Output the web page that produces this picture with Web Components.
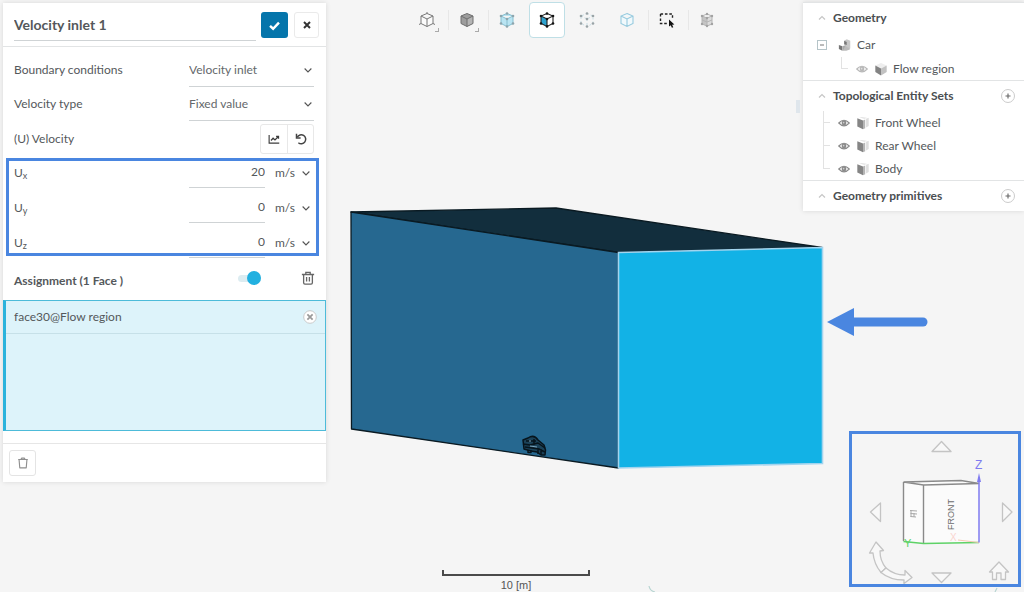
<!DOCTYPE html>
<html lang="en">
<head>
<meta charset="utf-8">
<title>Velocity inlet 1</title>
<style>
  body { margin: 0; background: #f5f5f5; color: #54585b; font: 12px/20px Lato, sans-serif; }
</style>
</head>
<body>
<sim-workbench>
  <flow-scene slot="scene"></flow-scene>
  <inlet-panel slot="left"></inlet-panel>
  <view-toolbar slot="tools"></view-toolbar>
  <geometry-panel slot="right"></geometry-panel>
  <scale-bar slot="scale">10 [m]</scale-bar>
  <view-cube slot="cube"></view-cube>
</sim-workbench>

<script>
const define = (name, css, html) => customElements.define(name, class extends HTMLElement {
  constructor() {
    super();
    const root = this.attachShadow({ mode: 'open' });
    root.innerHTML = `<style>*{box-sizing:border-box}button,input,select{font:inherit;color:inherit;margin:0}button{padding:0;cursor:pointer}${css}</style>` +
      (typeof html === 'function' ? html(this) : html);
  }
});

/* Icons */
const hex = 'M8 1.5 14 4V11.500L8 14.5 2 11.500V4Z';
const inner = 'M2 4 8 7 14 4M8 7V14.5';
const dots = color => `<g fill="${color}"><circle cx="8" cy="1.5" r="1.3"/><circle cx="14" cy="4" r="1.3"/><circle cx="14" cy="11.5" r="1.3"/><circle cx="8" cy="14.5" r="1.3"/><circle cx="2" cy="11.5" r="1.3"/><circle cx="2" cy="4" r="1.3"/><circle cx="8" cy="7" r="1.3"/></g>`;
const icons = {
  check: '<path d="M2.5 8.5 6.3 12 13.5 4.5" fill="none" stroke="#fff" stroke-width="3"/>',
  close: '<path d="M4 4 12 12M12 4 4 12" stroke="#333" stroke-width="2.6"/>',
  chevron: '<path d="M3.5 6 8 10.5 12.5 6" fill="none" stroke="#555" stroke-width="1.5"/>',
  up: '<path d="M4 10 8 6 12 10" fill="none" stroke="#c6c6c6" stroke-width="1.6"/>',
  chart: '<path d="M1.5 2.5V13.5H15" fill="none" stroke="#3c3c3c" stroke-width="1.5"/><path d="M4 10 6.8 7 9.3 9.2 13.5 5M10.8 4.6H14V7.8" fill="none" stroke="#3c3c3c" stroke-width="1.7"/>',
  undo: '<path d="M3 5.500A6 6 0 1 1 4.500 13" fill="none" stroke="#444" stroke-width="2"/><path d="M2 1V6.500H7.500" fill="none" stroke="#444" stroke-width="2"/>',
  trash: '<path d="M1 4H15M5.5 4V1.5H10.5V4M3 4V13.5Q3 15 4.5 15H11.5Q13 15 13 13.5V4M6.4 6.8V12M9.6 6.8V12" fill="none" stroke="#666" stroke-width="1.5"/>',
  bin: '<path d="M2.5 4H13.5M5.5 4 6.5 2.5H9.5L10.5 4M3.5 4 4.3 13.5H11.7L12.5 4" fill="none" stroke="#8f8f8f" stroke-width="1.3" stroke-linejoin="round"/>',
  minus: '<path d="M4 8H12" stroke="#777" stroke-width="2"/>',
  plus: '<path d="M8 4V12M4 8H12" stroke="#666" stroke-width="1.8"/>',
  remove: '<circle cx="8" cy="8" r="7.2" fill="#fff" stroke="#c4c4c4" stroke-width="1"/><path d="M5 5 11 11M11 5 5 11" stroke="#9a9a9a" stroke-width="2"/>',
  eye: '<path d="M1 8Q8 0.5 15 8Q8 15.5 1 8Z" fill="#fff" stroke="#8a8a8a" stroke-width="1.5"/><circle cx="8" cy="8" r="3.2" fill="#8a8a8a"/><circle cx="7.500" cy="7.500" r="1.1" fill="#ccc"/>',
  solid: '<path d="M8 1 14.5 4 8 7.5 1.5 4Z" fill="#eee"/><path d="M1.5 4 8 7.5V15.5L1.5 11.5Z" fill="#838383"/><path d="M14.5 4 8 7.5V15.5L14.5 11.5Z" fill="#c2c2c2"/>',
  faces: '<path d="M1.500 2.500 8 5V15L1.500 12Z" fill="#858585"/><path d="M8 5 10.500 4V14L8 15Z" fill="#b5b5b5"/><path d="M11.500 3 14.500 2V11.500L11.500 13Z" fill="#dedede"/><path d="M3.5 1.5 9.5 3.5 12.5 2 7 1Z" fill="#e6e6e6"/>',
  part: '<path d="M1 8 5 9.5V14.5L1 12.5Z" fill="#777"/><path d="M5 9.5 9 8V12.5L5 14.5Z" fill="#aaa"/><path d="M9 8 13.5 9.5V13L9.5 14.5 5.5 14.5Z" fill="#bbb"/><path d="M7 3 10 1.5 14 3V12L9.5 10V5Z" fill="#c8c8c8"/><path d="M7 3 10 4.5V8L7 7.5Z" fill="#777"/>',
  wire: `<path d="${hex}${inner}" fill="#fbfbfb" stroke="#777" stroke-width="1"/><path d="M0 12.5 2 11.5M16 12.5 14 11.5M8 1.5V0" stroke="#777"/>`,
  shaded: `<path d="${hex}" fill="#9d9d9d"/><path d="M8 7 14 4V11.500L8 14.5Z" fill="#b4b4b4"/><path d="${hex}${inner}" fill="none" stroke="#6f6f6f" stroke-width="1"/>`,
  volume: `<path d="${hex}${inner}" fill="#b9e4f2" stroke="#86bfd0" stroke-width="1"/>${dots('#8ea5ad')}`,
  face: `<path d="${hex}" fill="#fff"/><path d="M2 4 8 7V14.5L2 11.500Z" fill="#2ea3d0"/><path d="${hex}${inner}" fill="none" stroke="#222" stroke-width="1.1"/>${dots('#111')}`,
  nodes: `<path d="${hex}${inner}" fill="none" stroke="#c9dde4" stroke-width="1" stroke-dasharray="2 2"/>${dots('#9aa3a6')}`,
  body: `<path d="${hex}${inner}" fill="#f1f9fc" stroke="#96cade" stroke-width="1.1"/>`,
  box: '<path d="M1.500 2H13.500V7M1.500 2V11.500H9" fill="none" stroke="#222" stroke-width="1.400" stroke-dasharray="2.600 1.800"/><path d="M10 7.5V14.6L11.7 13.2 12.9 15.8 14.3 15.2 13.1 12.7 15.4 12.4Z" fill="#111"/>',
  mesh: '<path d="M3 4 8 6V14L3 12Z" fill="#c4c4c4"/><path d="M8 6 13 4V12L8 14Z" fill="#dcdcdc"/><path d="M3 4 8 2 13 4 8 6ZM3 8 8 10 13 8M3 12 8 14 13 12M8 6V14M3 4V12M13 4V12" fill="none" stroke="#b4b4b4" stroke-width="1"/><g fill="#a2a2a2"><circle cx="8" cy="2" r="1.200"/><circle cx="3" cy="4" r="1.200"/><circle cx="13" cy="4" r="1.200"/><circle cx="8" cy="6" r="1.200"/><circle cx="3" cy="12" r="1.200"/><circle cx="13" cy="12" r="1.200"/><circle cx="8" cy="14" r="1.200"/></g>'
};
customElements.define('ui-icon', class extends HTMLElement {
  constructor() {
    super();
    const size = this.getAttribute('size') || 16;
    this.attachShadow({ mode: 'open' }).innerHTML =
      `<style>:host{display:block;flex:none}svg{display:block}</style>
       <svg width="${size}" height="${size}" viewBox="0 0 16 16" aria-hidden="true">${icons[this.getAttribute('name')]}</svg>`;
  }
});

define('sim-workbench', `
  :host { display: grid; position: relative; min-height: 100vh; overflow: hidden;
    grid-template: auto 1fr auto / 326px 1fr 221px; }
  ::slotted([slot=scene]) { position: absolute; inset: 0; }
  ::slotted([slot=left]) { grid-area: 1 / 1 / 4 / 2; align-self: start; margin: 3px 0 0 3px; z-index: 1; }
  ::slotted([slot=tools]) { grid-area: 1 / 2; align-self: start; z-index: 1; }
  ::slotted([slot=right]) { grid-area: 1 / 3; align-self: start; margin-top: 2px; z-index: 1; }
  ::slotted([slot=scale]) { grid-area: 3 / 1 / 4 / 4; align-self: end; justify-self: center; margin-left: 8px; z-index: 1; }
  ::slotted([slot=cube]) { grid-area: 2 / 3 / 4 / 4; place-self: end; margin: 0 3px 5px 0; z-index: 1; }`,
  `<slot name="scene"></slot><slot name="left"></slot><slot name="tools"></slot><slot name="right"></slot><slot name="scale"></slot><slot name="cube"></slot>`);

/* Left panel */
define('select-field', `
  :host { display: block; }
  .row { display: grid; grid-template-columns: 1fr 125px; align-items: center; height: 34px; }
  .pick { display: grid; align-items: center; height: 34px; border-bottom: 1px solid #cfd3d5; }
  select { grid-area: 1 / 1; width: 100%; height: 30px; border: 0; padding: 0; background: none; appearance: none; color: #64686b; outline: 0; }
  ui-icon { grid-area: 1 / 1; justify-self: end; pointer-events: none; }`,
  el => `<div class="row"><label for="s">${el.getAttribute('label')}</label>
    <span class="pick"><select id="s"><option>${el.getAttribute('value')}</option></select><ui-icon name="chevron" size="12"></ui-icon></span></div>`);

define('component-field', `
  :host { display: block; }
  .row { display: grid; grid-template-columns: 1fr 76px 49px; height: 35px; }
  label { line-height: 34px; }
  ::slotted(sub) { font-size: 9px; line-height: 0; vertical-align: -2px; }
  input { min-width: 0; height: 32px; border: 0; border-bottom: 1px solid #cfd3d5; border-radius: 0; background: none; text-align: right; padding: 0; outline: 0; }
  .unit { display: grid; align-items: center; height: 34px; }
  select { grid-area: 1 / 1; border: 0; padding: 0 0 0 10px; background: none; appearance: none; outline: 0; width: 100%; }
  ui-icon { grid-area: 1 / 1; justify-self: end; pointer-events: none; margin-right: 2px; }`,
  el => `<div class="row"><label for="v"><slot></slot></label><input id="v" value="${el.getAttribute('value')}">
    <span class="unit"><select aria-label="Unit"><option>m/s</option></select><ui-icon name="chevron" size="12"></ui-icon></span></div>`);

define('toggle-switch', `
  :host { display: block; }
  label { display: grid; width: 23px; height: 16px; align-items: center; }
  input { grid-area: 1 / 1; appearance: none; width: 23px; height: 7px; border-radius: 4px; background: #dcecf1; }
  i { grid-area: 1 / 1; justify-self: end; width: 14px; height: 14px; border-radius: 50%; background: #22b0e0; pointer-events: none; }
  input:not(:checked) + i { justify-self: start; background: #aaa; }`,
  `<label><input type="checkbox" checked aria-label="Face selection"><i></i></label>`);

define('inlet-panel', `
  :host { display: block; background: #fff; box-shadow: 0 0 5px rgba(0,0,0,.12); }
  header { display: flex; align-items: flex-start; height: 44px; padding: 9px 7px 0 11px; border-bottom: 1px solid #e2e4e5; }
  .title { flex: 1; min-width: 0; height: 29px; border: 0; border-bottom: 1px solid #cfd3d5; border-radius: 0; padding: 0 0 4px; font-size: 14px; font-weight: 700; background: none; outline: 0; }
  .ok, .no { display: grid; place-items: center; height: 26px; border-radius: 3px; }
  .ok { width: 27px; margin: 0 6px 0 5px; border: 0; background: #0575ab; }
  .no { width: 25px; border: 1px solid #eaeaea; background: #fff; }
  .fields { padding: 6px 12px 0 11px; }
  .velocity { display: flex; align-items: center; justify-content: space-between; height: 35px; }
  .pair { display: flex; border: 1px solid #e8e8e8; border-radius: 3px; }
  .pair button { display: grid; place-items: center; width: 26px; height: 28px; border: 0; background: none; }
  .pair button + button { border-left: 1px solid #e8e8e8; }
  .vector { position: relative; }
  .vector::after { content: ""; position: absolute; inset: 2px -5px 5px -8px; border: 3px solid #4a86e0; pointer-events: none; }
  .assign { display: flex; align-items: center; height: 39px; padding: 0 11px 5px; font-weight: 700; }
  .assign span { flex: 1; padding-top: 6px; }
  .assign toggle-switch { margin-right: 40px; }
  .icon { border: 0; background: none; display: grid; }
  ul { list-style: none; margin: 0; padding: 0; min-height: 131px; border: 1px solid #4dbbd9; border-left: 3px solid #2bb3dc; background: #ddf3fa; }
  li { display: flex; align-items: center; justify-content: space-between; height: 33px; padding: 0 8px; border-bottom: 1px solid #c6e0e8; }
  footer { margin-top: 12px; padding: 6px; border-top: 1px solid #e6e6e6; }
  .del { display: grid; place-items: center; width: 27px; height: 26px; border: 1px solid #e4e4e4; border-radius: 3px; background: #fff; }`,
  `<header><input class="title" aria-label="Name" value="Velocity inlet 1">
     <button class="ok" aria-label="Apply"><ui-icon name="check" size="13"></ui-icon></button>
     <button class="no" aria-label="Close"><ui-icon name="close" size="12"></ui-icon></button></header>
   <div class="fields">
     <select-field label="Boundary conditions" value="Velocity inlet"></select-field>
     <select-field label="Velocity type" value="Fixed value"></select-field>
     <div class="velocity"><span>(U) Velocity</span><span class="pair">
       <button aria-label="Table input"><ui-icon name="chart" size="12"></ui-icon></button><button aria-label="Reset"><ui-icon name="undo" size="12"></ui-icon></button></span></div>
     <div class="vector">
       <component-field value="20">U<sub>x</sub></component-field>
       <component-field value="0">U<sub>y</sub></component-field>
       <component-field value="0">U<sub>z</sub></component-field>
     </div>
   </div>
   <div class="assign"><span>Assignment (1 Face )</span><toggle-switch></toggle-switch>
     <button class="icon" aria-label="Clear assignment"><ui-icon name="trash" size="14"></ui-icon></button></div>
   <ul><li>face30@Flow region<button class="icon" aria-label="Remove face"><ui-icon name="remove" size="14"></ui-icon></button></li></ul>
   <footer><button class="del" aria-label="Delete"><ui-icon name="bin" size="14"></ui-icon></button></footer>`);

/* Toolbar */
define('view-toolbar', `
  :host { display: flex; justify-content: center; padding: 2px 0 0 4px; }
  .slot { display: grid; place-items: center; width: 40px; height: 36px; position: relative; }
  .line::after { content: ""; position: absolute; right: -2px; top: 8px; height: 20px; border-right: 1px solid #e7e7e7; }
  button { display: grid; place-items: center; width: 36px; height: 36px; border: 1px solid transparent; border-radius: 4px; background: none; }
  button[aria-pressed=true] { background: #fff; border-color: #bfdfe6; }
  .more::before { content: ""; position: absolute; right: 8px; bottom: 6px; width: 3px; height: 3px; border: solid #aaa; border-width: 0 1px 1px 0; }`,
  [['wire','Wireframe','line more'],['shaded','Shaded','line more'],['volume','Pick volumes',''],['face','Pick faces',''],['nodes','Pick nodes',''],['body','Pick bodies','line'],['box','Box select','line'],['mesh','Mesh','']]
    .map(([icon, name, cls]) => `<span class="slot ${cls}"><button aria-label="${name}" aria-pressed="${icon === 'face'}"><ui-icon name="${icon}" size="16"></ui-icon></button></span>`).join(''));

/* Geometry tree */
define('tree-section', `
  :host { display: block; border-top: 1px solid #e2e4e5; }
  header { display: flex; align-items: center; height: 30px; padding: 0 9px 0 13px; font-weight: 700; color: #4a4e51; }
  ui-icon { margin-right: 5px; }
  h2 { flex: 1; margin: 0; font: inherit; }
  button { display: grid; place-items: center; width: 14px; height: 14px; border: 1px solid #ccc; border-radius: 50%; background: #fff; }
  button ui-icon { margin: 0; }`,
  el => `<header><ui-icon name="up" size="12"></ui-icon><h2>${el.getAttribute('heading')}</h2>${el.hasAttribute('addable') ? '<button aria-label="Add"><ui-icon name="plus" size="10"></ui-icon></button>' : ''}</header><slot></slot>`);

define('tree-item', `
  :host { display: flex; align-items: center; height: 23px; padding-left: 20px; }
  :host([deep]) { padding-left: 38px; }
  :host([root]) { padding-left: 14px; height: 24px; }
  .branch { align-self: stretch; width: 7px; margin-right: 8px; border-left: 1px solid #e2e2e2;
    background: linear-gradient(#e2e2e2, #e2e2e2) 0 50% / 7px 1px no-repeat; }
  :host([last]) .branch { height: 12px; align-self: flex-start; background-position: 0 100%; }
  .fold { display: grid; place-items: center; width: 10px; height: 10px; border: 1px solid #b5c4c8; background: #fff; margin-right: 11px; }
  .eye { border: 0; background: none; display: grid; margin-right: 6px; }
  :host([deep]) .eye { opacity: .6; }
  .kind { margin-right: 5px; }`,
  el => (el.hasAttribute('root') ? '<button class="fold" aria-label="Collapse"><ui-icon name="minus" size="8"></ui-icon></button>'
      : '<span class="branch"></span><button class="eye" aria-label="Toggle visibility"><ui-icon name="eye" size="12"></ui-icon></button>')
    + `<ui-icon class="kind" name="${el.getAttribute('icon')}" size="14"></ui-icon><span><slot></slot></span>`);

define('geometry-panel', `
  :host { display: block; position: relative; background: #fff; box-shadow: 0 0 5px rgba(0,0,0,.12); }
  :host::before { content: ""; position: absolute; left: -7px; top: 98px; width: 4px; height: 13px; background: #dfe6ec; }`,
  `<tree-section heading="Geometry"><tree-item root icon="part">Car</tree-item><tree-item deep last icon="solid">Flow region</tree-item></tree-section>
   <tree-section heading="Topological Entity Sets" addable><tree-item icon="faces">Front Wheel</tree-item><tree-item icon="faces">Rear Wheel</tree-item><tree-item last icon="faces">Body</tree-item></tree-section>
   <tree-section heading="Geometry primitives" addable></tree-section>`);

/* 3D viewport */
define('flow-scene', `:host { display: block; } svg { display: block; width: 100%; height: 100%; }`,
  `<svg viewBox="0 0 1024 592" role="img" aria-label="Flow region with inlet face selected">
    <g stroke="#0a1a22" stroke-width="1.3" stroke-linejoin="round">
      <path d="M351 212 556 208 822 247.500 618.500 252.500Z" fill="#122e3d"/>
      <path d="M351 212 618.500 252.500V468L351.500 429Z" fill="#266890"/>
    </g>
    <path d="M618.500 252.500 822.500 247.500V463.500L618.500 468Z" fill="#12b2e6" stroke="#a3d4ee" stroke-width="1.6"/>
    <g fill="none" stroke="#07141c" stroke-width="1.500" stroke-linejoin="round">
      <path d="M523 440 528 438Q534 434 538 440L544 445 545.500 450 545 455 541 455 537 452 531 451 524 449Z" fill="#1b4259"/>
      <path d="M523 444 530 445 538 443 545 448M526 441H536M525 447 532 448 539 449 545 452M528 450V452.500H531V450M538 448V454M541 449V455M534 439V445"/>
    </g>
    <path d="M530 446 537 447M529 441H531" stroke="#7da6bd" stroke-width="1"/>
    <path d="M854 322H923" stroke="#4a86e0" stroke-width="9" stroke-linecap="round"/>
    <path d="M827 322 854 308V336Z" fill="#4a86e0"/>
    <path d="M649 586Q650 591 655 592M995 592 997 588" fill="none" stroke="#b8d5d2" stroke-width="1.2"/>
  </svg>`);

define('scale-bar', `
  :host { display: block; width: 148px; color: #555; font: 11px/13px "Liberation Sans", Arial, sans-serif; text-align: center; }
  i { display: block; height: 6px; margin-bottom: 3px; border: 2px solid #4a4a4a; border-top: 0; }`,
  `<i></i><slot></slot>`);

define('view-cube', `
  :host { display: block; border: 3px solid #4a86e0; }
  svg { display: block; }
  text { font-family: "Liberation Sans", Arial, sans-serif; }`,
  `<svg width="166" height="150" viewBox="852 434 166 150" role="img" aria-label="View orientation">
    <g fill="#f8f8f8" stroke="#c4c4c4" stroke-width="1.300" stroke-linejoin="round">
      <path d="M932 451.500 941.500 441.500 951 451.500ZM932 573 941.500 582.500 951 573ZM880.500 503V521.500L870.500 512ZM1002.500 503V521.500L1012 512Z"/>
      <path d="M869.500 553 876 542 883.500 550.500 880 551Q880 561 886 568L881 572.500Q874 564 873 553Z"/>
      <path d="M886 568Q894 575 905 575V570.500L912 577.500 904 583.500V580Q890 580 881 572.500Z"/>
      <path d="M989.500 572 999 562 1008.500 572H1005.500V579.500H1001V573H996.500V579.500H992.500V572Z"/>
    </g>
    <path d="M903.500 482 961 480.500 979 483.500V542.500L923.500 543.500 903.500 541Z" fill="#fbfbfb"/>
    <path d="M979 483.500 923.500 485 903.500 482 961 480.500ZM903.500 482V541M923.500 485V543.500" fill="none" stroke="#8a8a8a" stroke-width="1.400"/>
    <path d="M910 510.500 917 511M910.500 513.500 917 514M910.500 516.500 916 517M911 510V517M914 513V517" stroke="#a8a8a8" fill="none"/>
    <path d="M903.500 541.500 923.500 543.500 979 542.500" fill="none" stroke="#5ed267" stroke-width="1.500"/>
    <path d="M958 540 979 542.500" stroke="#f4c9b2" stroke-width="1.200"/>
    <path d="M979 542.500V477" stroke="#7f7bf0" stroke-width="1.500"/><path d="M979 473 977 482H981Z" fill="#7f7bf0"/>
    <text x="975" y="469" font-size="12" fill="#7f7bf0">Z</text>
    <text x="904" y="547" font-size="11" fill="#5ed267">Y</text>
    <text x="950" y="541" font-size="10" fill="#fad5cf">X</text>
    <text transform="translate(954 530) rotate(-90)" font-size="9" fill="#6c6c6c">FRONT</text>
  </svg>`);
</script>
</body>
</html>
